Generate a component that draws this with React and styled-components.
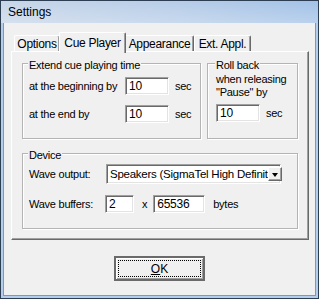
import React from 'react';
import styled, { createGlobalStyle } from 'styled-components';

const GlobalStyle = createGlobalStyle`
  html, body {
    margin: 0;
    padding: 0;
    background: #f0f0f0;
  }
  body {
    font-family: 'Liberation Sans', Arial, sans-serif;
    font-size: 11px;
    letter-spacing: -0.25px;
    color: #000;
  }
`;

const Window = styled.div`
  width: 319px;
  height: 299px;
  box-sizing: border-box;
  border: 1px solid #2d3e52;
  background: #b4cdea;
  display: flex;
  flex-direction: column;
`;

const TitleBar = styled.div`
  height: 22px;
  flex: none;
  display: flex;
  align-items: center;
  padding-left: 7px;
  font-size: 12px;
  letter-spacing: 0;
  background:
    linear-gradient(to bottom, rgba(255, 255, 255, 0) 0%, rgba(255, 255, 255, 0.25) 100%),
    linear-gradient(to right, #c8d6e8 0%, #b7cde8 55%, #a3c2e7 100%);
`;

const Frame = styled.div`
  flex: 1;
  display: flex;
  padding: 0 2px 2px 2px;
`;

const Client = styled.div`
  flex: 1;
  background: #f0f0f0;
  border: 1px solid #4fa9de;
  border-top: none;
  display: flex;
  flex-direction: column;
`;

const TabRow = styled.div`
  display: flex;
  align-items: flex-end;
  height: 19px;
  margin: 9px 0 0 10px;
`;

const Tab = styled.div`
  box-sizing: border-box;
  width: ${p => p.$w}px;
  height: ${p => (p.$active ? 21 : 16)}px;
  margin-bottom: ${p => (p.$active ? -2 : 0)}px;
  margin-left: ${p => (p.$active ? -1 : 0)}px;
  margin-right: ${p => (p.$active ? -1 : 0)}px;
  padding-top: ${p => (p.$active ? 3 : 1)}px;
  border: 1px solid #fff;
  border-right-color: #696969;
  border-bottom: none;
  box-shadow: inset -1px 0 #a0a0a0;
  border-radius: 2px 2px 0 0;
  background: #f0f0f0;
  text-align: center;
  font-size: 12px;
  letter-spacing: -0.3px;
  position: relative;
  z-index: ${p => (p.$active ? 2 : 0)};
`;

const Panel = styled.div`
  box-sizing: border-box;
  width: 298px;
  height: 189px;
  margin-left: 7px;
  border: 1px solid #fff;
  border-right-color: #696969;
  border-bottom-color: #696969;
  box-shadow: inset -1px -1px #a0a0a0;
  padding: 11px 0 0 10px;
  position: relative;
  z-index: 1;
`;

const GroupRow = styled.div`
  display: flex;
  gap: 6px;
`;

const Group = styled.div`
  position: relative;
  box-sizing: border-box;
  width: ${p => p.$w}px;
  height: 76px;
  border: 1px solid #b4b4b4;
  box-shadow: inset 1px 1px #fff, 1px 1px #fff;
  padding: ${p => p.$pad};
  margin-top: ${p => p.$mt || 0}px;
`;

const Legend = styled.span`
  position: absolute;
  top: -5px;
  left: ${p => p.$left}px;
  padding: 0 1px;
  line-height: 13px;
  background: #f0f0f0;
`;

const FieldRow = styled.div`
  display: flex;
  align-items: center;
  height: ${p => p.$h || 18}px;
  margin-bottom: ${p => p.$mb || 0}px;
`;

const Label = styled.span`
  width: ${p => p.$w}px;
  flex: none;
`;

const Input = styled.div`
  box-sizing: border-box;
  width: ${p => p.$w}px;
  height: 18px;
  margin-left: ${p => p.$ml || 0}px;
  background: #fff;
  border: 1px solid #a0a0a0;
  border-right-color: #fff;
  border-bottom-color: #fff;
  box-shadow: inset 1px 1px #696969, inset -1px -1px #e3e3e3;
  padding: 2px 0 0 3px;
  line-height: 13px;
  font-size: 12px;
  flex: none;
`;

const Unit = styled.span`
  margin-left: ${p => p.$ml}px;
`;

const Note = styled.div`
  line-height: 13px;
  margin-bottom: 5px;
`;

const Select = styled.div`
  box-sizing: border-box;
  width: 175px;
  height: 20px;
  background: #fff;
  border: 1px solid #a0a0a0;
  border-right-color: #fff;
  border-bottom-color: #fff;
  box-shadow: inset 1px 1px #696969, inset -1px -1px #e3e3e3;
  display: flex;
  align-items: center;
  padding: 2px 2px 2px 3px;
  font-size: 11.5px;
  white-space: nowrap;
`;

const SelectText = styled.span`
  flex: 1;
`;

const DropButton = styled.div`
  width: 14px;
  height: 14px;
  flex: none;
  box-sizing: border-box;
  background: #f0f0f0;
  border: 1px solid #fff;
  border-right-color: #696969;
  border-bottom-color: #696969;
  box-shadow: inset -1px -1px #a0a0a0;
  display: flex;
  align-items: center;
  justify-content: center;
`;

const Arrow = styled.div`
  width: 0;
  height: 0;
  border-left: 3.5px solid transparent;
  border-right: 3.5px solid transparent;
  border-top: 4px solid #000;
  margin-top: 1px;
`;

const Footer = styled.div`
  display: flex;
  justify-content: center;
  padding-top: 16px;
`;

const Button = styled.div`
  box-sizing: border-box;
  width: 91px;
  height: 25px;
  border: 2px solid #6a6a6a;
  box-shadow: inset 1px 1px #fff, inset -1px -1px #a0a0a0;
  background: #f0f0f0;
  padding: 2px;
  display: flex;
`;

const Focus = styled.div`
  flex: 1;
  border: 1px dotted #000;
  display: flex;
  align-items: center;
  justify-content: center;
  font-size: 12px;
  letter-spacing: 0;
`;

export default function App() {
  return (
    <>
      <GlobalStyle />
      <Window>
        <TitleBar>Settings</TitleBar>
        <Frame>
          <Client>
            <TabRow>
              <Tab $w={46}>Options</Tab>
              <Tab $w={67} $active>Cue Player</Tab>
              <Tab $w={69}>Appearance</Tab>
              <Tab $w={57}>Ext. Appl.</Tab>
            </TabRow>
            <Panel>
              <GroupRow>
                <Group $w={179} $pad="13px 0 0 6px">
                  <Legend $left={5}>Extend cue playing time</Legend>
                  <FieldRow $mb={10}>
                    <Label $w={96}>at the beginning by</Label>
                    <Input $w={44}>10</Input>
                    <Unit $ml={6}>sec</Unit>
                  </FieldRow>
                  <FieldRow>
                    <Label $w={96}>at the end by</Label>
                    <Input $w={44}>10</Input>
                    <Unit $ml={6}>sec</Unit>
                  </FieldRow>
                </Group>
                <Group $w={91} $pad="9px 0 0 8px">
                  <Legend $left={7}>Roll back</Legend>
                  <Note>when releasing<br />"Pause" by</Note>
                  <FieldRow>
                    <Input $w={44}>10</Input>
                    <Unit $ml={6}>sec</Unit>
                  </FieldRow>
                </Group>
              </GroupRow>
              <Group $w={276} $mt={14} $pad="10px 0 0 6px">
                <Legend $left={5}>Device</Legend>
                <FieldRow $h={20} $mb={11}>
                  <Label $w={77}>Wave output:</Label>
                  <Select>
                    <SelectText>Speakers (SigmaTel High Definit</SelectText>
                    <DropButton><Arrow /></DropButton>
                  </Select>
                </FieldRow>
                <FieldRow>
                  <Label $w={76}>Wave buffers:</Label>
                  <Input $w={29}>2</Input>
                  <Unit $ml={8}>x</Unit>
                  <Input $w={52} $ml={6}>65536</Input>
                  <Unit $ml={8}>bytes</Unit>
                </FieldRow>
              </Group>
            </Panel>
            <Footer>
              <Button>
                <Focus><u>O</u>K</Focus>
              </Button>
            </Footer>
          </Client>
        </Frame>
      </Window>
    </>
  );
}
